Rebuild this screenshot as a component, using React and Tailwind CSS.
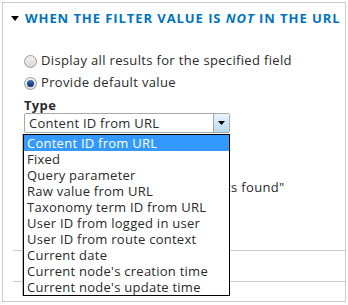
import React from "react";

const items = [
  "Content ID from URL",
  "Fixed",
  "Query parameter",
  "Raw value from URL",
  "Taxonomy term ID from URL",
  "User ID from logged in user",
  "User ID from route context",
  "Current date",
  "Current node's creation time",
  "Current node's update time",
];

function Radio({ checked }) {
  return (
    <span className="relative inline-block w-[13px] h-[13px] rounded-full border border-[#9a9a9a] bg-gradient-to-b from-[#f2f2f2] to-[#d8d8d8] shrink-0">
      {checked && (
        <span className="absolute left-[2px] top-[2px] w-[7px] h-[7px] rounded-full bg-gradient-to-b from-[#3a6fb0] to-[#0c2f6b]" />
      )}
    </span>
  );
}

export default function App() {
  return (
    <div className="w-[348px] h-[305px] bg-white relative overflow-hidden text-[#2a2a2a]" style={{ fontFamily: '"Open Sans", sans-serif' }}>
      <div className="absolute left-[2px] top-[2px] w-[344px] h-[300px] border border-[#cccccc]">
        <div className="flex items-center h-[26px] mt-[3px] pl-[8px]">
          <svg width="8" height="6" viewBox="0 0 8 6" className="mr-[6px]"><path d="M0 0 L8 0 L4 5 Z" fill="#000" /></svg>
          <span className="text-[13px] font-bold text-[#0074bd] tracking-[0.93px]">
            WHEN THE FILTER VALUE IS <i>NOT</i> IN THE URL
          </span>
        </div>
        <div className="pl-[21px] pt-[18px] text-[13px] tracking-[0.34px]">
          <div className="flex items-center gap-[4px] h-[22px]">
            <Radio />
            <span>Display all results for the specified field</span>
          </div>
          <div className="flex items-center gap-[4px] h-[22px]">
            <Radio checked />
            <span>Provide default value</span>
          </div>
          <div className="font-bold mt-[3px] leading-[16px]">Type</div>
          <div className="flex items-center w-[206px] h-[20px] border border-[#a8a8a8] rounded-[2px] bg-white tracking-[0.25px]">
            <span className="flex-1 pl-[4px] leading-[18px]">Content ID from URL</span>
            <span className="w-[16px] h-[18px] border-l border-[#a8a8a8] bg-gradient-to-b from-[#eaf4fc] to-[#bcd9f0] flex items-center justify-center">
              <svg width="7" height="4" viewBox="0 0 7 4"><path d="M0 0 L7 0 L3.5 4 Z" fill="#000" /></svg>
            </span>
          </div>
          <div className="flex items-center gap-[4px] h-[22px] mt-[44px]">
            <Radio />
            <span>Display contents of "No results found"</span>
          </div>
        </div>
        <div className="absolute left-[10px] right-0 top-[247px] border-t border-[#cccccc]" />
        <div className="absolute left-[10px] right-0 top-[278px] border-t border-[#cccccc]" />
      </div>
      <div className="absolute left-[23px] top-[134px] w-[207px] border border-black bg-white shadow-[-1px_0_0_#bbb] text-[13px] tracking-[0.25px]">
        {items.map((t, i) => (
          <div key={t} className={"h-[16px] leading-[16px] pl-[3px] " + (i === 0 ? "bg-[#3399ff] text-white" : "text-[#2a2a2a]")}>
            {t}
          </div>
        ))}
      </div>
    </div>
  );
}
